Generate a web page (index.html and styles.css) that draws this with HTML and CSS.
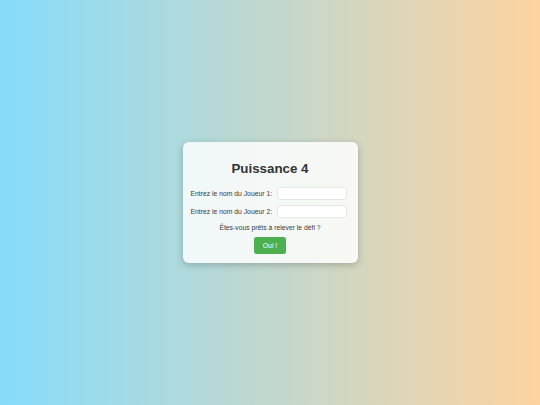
FILE: index.html
```html
<!DOCTYPE html>
<html lang="fr">
<head>
<meta charset="utf-8">
<title>Puissance 4</title>
<link rel="stylesheet" href="styles.css">
</head>
<body>
  <div class="card">
    <h1 class="title">Puissance 4</h1>
    <div class="row">
      <label class="label" for="j1">Entrez le nom du Joueur 1:</label>
      <input class="field" id="j1" type="text">
    </div>
    <div class="row">
      <label class="label" for="j2">Entrez le nom du Joueur 2:</label>
      <input class="field" id="j2" type="text">
    </div>
    <p class="question">Êtes-vous prêts à relever le défi ?</p>
    <button class="btn" type="button">Oui !</button>
  </div>
</body>
</html>
```

FILE: styles.css
```css
html, body {
  margin: 0;
  padding: 0;
  height: 100%;
}
body {
  font-family: "Liberation Sans", Arial, sans-serif;
  background: linear-gradient(to right, #86dcfb, #fdd3a0);
  display: flex;
  align-items: center;
  justify-content: center;
}
.card {
  width: 175px;
  box-sizing: border-box;
  padding: 19px 7px 9px;
  border-radius: 6px;
  background: rgba(255, 255, 255, 0.82);
  box-shadow: 0 2px 7px rgba(0, 0, 0, 0.22);
  display: flex;
  flex-direction: column;
  align-items: center;
}
.title {
  margin: 0 0 10px;
  font-size: 13.33px;
  line-height: 15.33px;
  font-weight: bold;
  color: #333;
}
.row {
  display: flex;
  align-items: center;
  gap: 5px;
  margin: 0 3px 5px 0;
  white-space: nowrap;
}
.label {
  font-size: 6.8px;
  color: #3a3a3a;
  white-space: nowrap;
  flex: none;
}
.field {
  flex: none;
  width: 69.5px;
  height: 13.33px;
  box-sizing: border-box;
  margin: 0;
  padding: 0 3px;
  border: 1px solid #e6e6e6;
  border-radius: 2.5px;
  background: #fff;
  font-size: 6.67px;
  outline: none;
}
.question {
  margin: 1px 0 4.5px;
  font-size: 6.8px;
  line-height: 8px;
  color: #3a3a3a;
}
.btn {
  height: 16.67px;
  padding: 0 9px;
  border: none;
  border-radius: 2.5px;
  background: #4caf50;
  color: #fff;
  font-family: "Liberation Sans", Arial, sans-serif;
  font-size: 6.8px;
}
```
